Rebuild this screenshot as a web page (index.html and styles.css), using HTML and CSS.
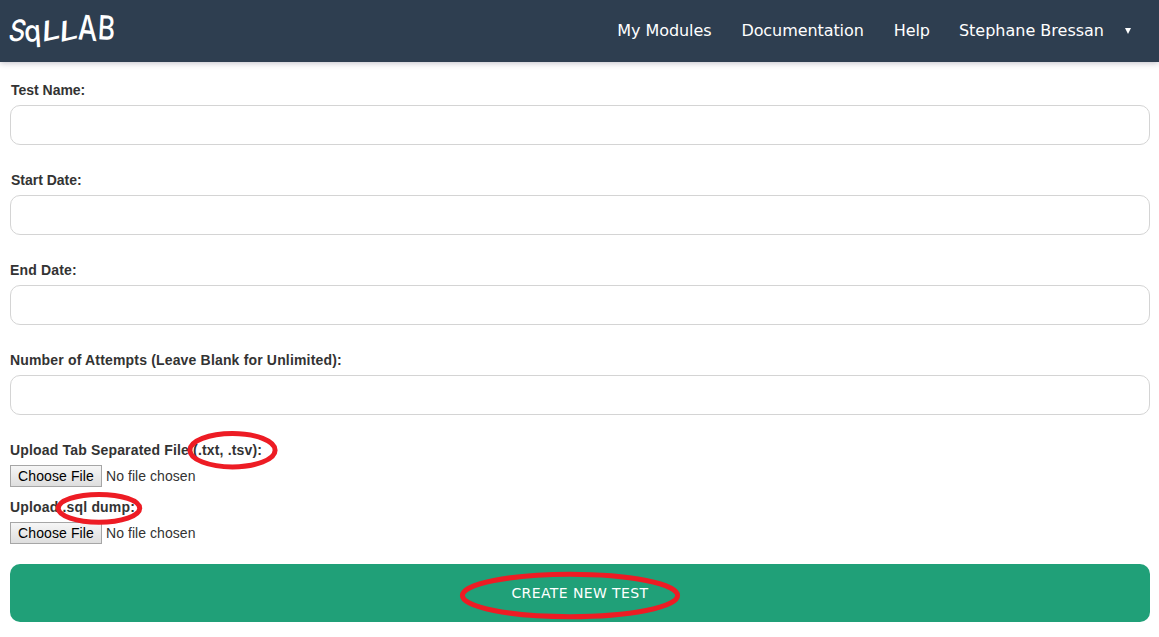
FILE: index.html
```html
<!DOCTYPE html>
<html lang="en">
<head>
<meta charset="utf-8">
<title>SqLLAB</title>
<link rel="stylesheet" href="styles.css">
</head>
<body>
<header class="topbar">
  <a class="logo" aria-label="SqLLAB"><span class="l-s">S</span><span class="l-q">q</span><span class="l-l1">L</span><span class="l-l2">L</span><span class="l-a">A</span><span class="l-b">B</span></a>
  <nav class="nav">
    <a>My Modules</a>
    <a>Documentation</a>
    <a>Help</a>
    <a class="user">Stephane Bressan <svg class="caret" viewBox="0 0 6 6"><path d="M0 0H6L3 6Z" fill="#fff"/></svg></a>
  </nav>
</header>
<form class="form">
  <div class="field"><label class="nudge" for="name">Test Name:</label><input class="text" id="name" type="text"></div>
  <div class="field"><label class="nudge" for="start">Start Date:</label><input class="text" id="start" type="text"></div>
  <div class="field"><label for="end">End Date:</label><input class="text" id="end" type="text"></div>
  <div class="field"><label for="tries">Number of Attempts (Leave Blank for Unlimited):</label><input class="text" id="tries" type="text"></div>
  <div class="upload"><label>Upload Tab Separated File (.txt, .tsv):</label><div class="file"><button type="button">Choose File</button><span>No file chosen</span></div></div>
  <div class="upload"><label>Upload .sql dump:</label><div class="file"><button type="button">Choose File</button><span>No file chosen</span></div></div>
  <button class="submit" type="button">CREATE NEW TEST</button>
</form>
<svg class="marks" width="1159" height="637" viewBox="0 0 1159 637">
  <ellipse cx="232.5" cy="450.2" rx="42.6" ry="16.7"/>
  <ellipse cx="99" cy="508.3" rx="40.7" ry="13.9"/>
  <ellipse cx="570" cy="595.5" rx="107.6" ry="21.2"/>
</svg>
</body>
</html>
```
FILE: styles.css
```css
* { box-sizing: border-box; }
body { margin: 0; height: 637px; overflow: hidden; position: relative; background: #fff; color: #333; font: 14px/20px "Liberation Sans", Arial, sans-serif; }
.topbar { height: 62px; padding: 0 28px 0 10px; display: flex; justify-content: space-between; background: #2e3e50; box-shadow: 0 1px 6px rgba(46, 40, 70, .3); }
.logo { display: flex; height: 62px; color: #fff; font: 500 31px/60px Inter, sans-serif; }
.logo span { display: flex; justify-content: center; height: 62px; }
.l-s { width: 15px; transform: skewX(-12deg) scale(.82, .95); }
.l-q { width: 17px; transform: translate(-1px, 1px) rotate(-4deg) scale(.88, .95); }
.l-l1 { width: 17px; transform: translateX(1px) skewY(-16deg) rotate(3deg) scale(1.08, .9); }
.l-l2 { width: 18px; transform: translateX(1px) skewY(-16deg) rotate(3deg) scale(1.1, .9); }
.l-a { width: 21px; transform: translateY(-2px) skewY(6deg) scale(.88, 1.12); }
.l-b { width: 17px; transform: translateY(-2px) rotate(3deg) scale(.85, 1.08); }
.nav { display: flex; gap: 30px; color: #fff; font: 16px/62px "DejaVu Sans", Verdana, sans-serif; letter-spacing: -.08px; }
.user { display: flex; align-items: center; gap: 21px; height: 62px; margin-left: -1px; letter-spacing: 0; }
.caret { width: 6px; height: 6px; display: block; }
.form { padding: 18px 9px 0 10px; }
.field { height: 90px; }
label { display: block; height: 25px; font-weight: bold; letter-spacing: .17px; white-space: nowrap; }
.nudge { padding-left: 1px; letter-spacing: -.02px; }
.text { display: block; width: 100%; height: 40px; border: 1px solid #d4d4d4; border-radius: 10px; background: #fff; }
.upload { height: 57px; }
.file { display: flex; align-items: center; gap: 4px; height: 22px; letter-spacing: .06px; }
.file button { width: 92px; height: 22px; padding: 0; border: 1px solid #a6a6a6; border-radius: 0; background: linear-gradient(#f6f6f6, #dedede); color: #000; font: 14px/18px "Liberation Sans", Arial, sans-serif; letter-spacing: .1px; }
.submit { display: block; width: 100%; height: 58px; margin-top: 10px; padding: 1px 0 0; border: 0; border-radius: 10px; background: #20a078; color: #fff; font: 14px/57px "DejaVu Sans", Verdana, sans-serif; letter-spacing: .4px; }
.marks { position: absolute; left: 0; top: 0; pointer-events: none; fill: none; stroke: #ed1c24; stroke-width: 5; }
```
